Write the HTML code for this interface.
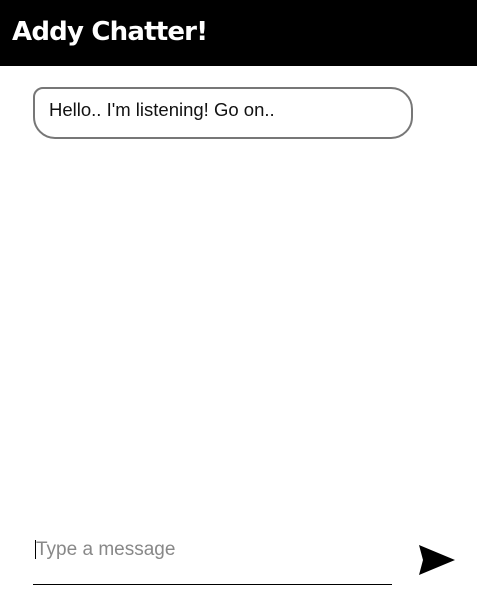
<!DOCTYPE html>
<html><head><style>
html,body{margin:0;padding:0;width:477px;height:609px;overflow:hidden;background:#fff;font-family:"Liberation Sans",sans-serif}
.hdr{position:absolute;left:0;top:0;width:477px;height:66px;background:#000}
.hdr span{position:absolute;left:12px;top:17px;color:#fff;font:bold 26px "DejaVu Sans",sans-serif;letter-spacing:-0.8px}
.bub{position:absolute;left:33px;top:87px;width:376px;height:48px;border:2px solid #777;border-radius:10px 22px 22px 22px;box-sizing:content-box}
.bub span{position:absolute;left:14px;top:10px;font-size:18.5px;color:#111}
.inp{position:absolute;left:36px;top:539px;font-size:19px;color:#888}
.cur{position:absolute;left:35px;top:540px;width:1px;height:19px;background:#000}
.line{position:absolute;left:33px;top:584px;width:359px;height:1px;background:#000}
svg{position:absolute;left:418px;top:544px}
</style></head><body>
<div class="hdr"><span>Addy Chatter!</span></div>
<div class="bub"><span>Hello.. I'm listening! Go on..</span></div>
<div class="cur"></div>
<div class="inp">Type a message</div>
<div class="line"></div>
<svg width="38" height="32" viewBox="0 0 38 32"><path d="M1 1 L37 16 L1 31 L5 16 Z" fill="#000"/></svg>
</body></html>
